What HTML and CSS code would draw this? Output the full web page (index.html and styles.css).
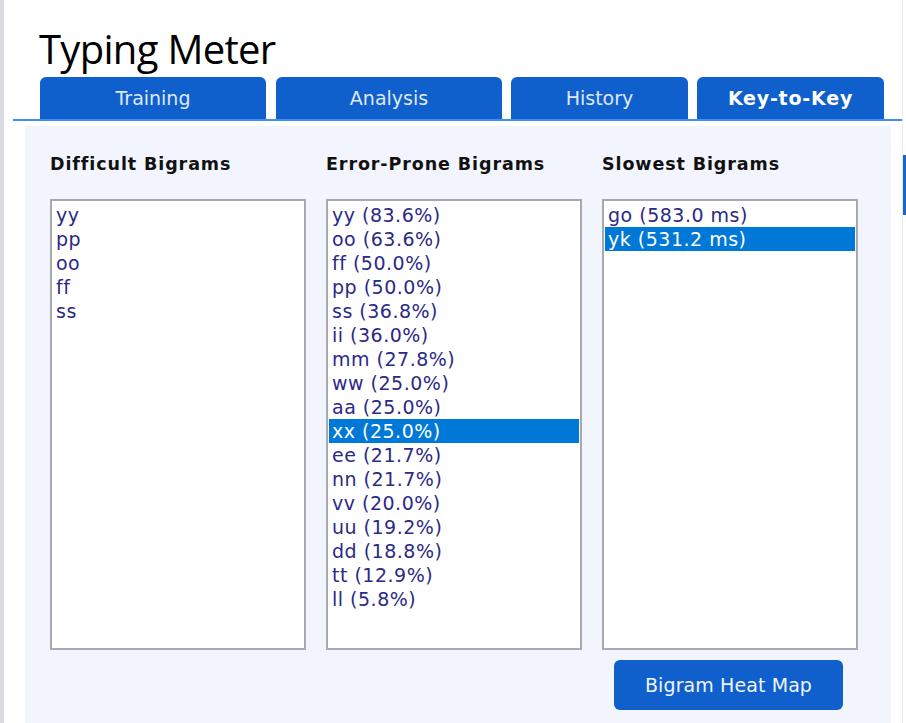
FILE: index.html
```html
<!DOCTYPE html>
<html lang="en">
<head>
    <meta charset="UTF-8">
    <meta name="viewport" content="width=device-width, initial-scale=1.0">
    <title>Typing Meter</title>
    <link rel="stylesheet" href="styles.css">
</head>
<body>
    <div class="window">
        <h1 class="title">Typing Meter</h1>

        <!-- Вкладки -->
        <div class="tab-bar">
            <div class="tab">Training</div>
            <div class="tab">Analysis</div>
            <div class="tab tab-small">History</div>
            <div class="tab tab-active">Key-to-Key</div>
        </div>

        <div class="panel">
            <div class="columns">
                <div class="column">
                    <h3>Difficult Bigrams</h3>
                    <div class="listbox">
                        <div class="item">yy</div>
                        <div class="item">pp</div>
                        <div class="item">oo</div>
                        <div class="item">ff</div>
                        <div class="item">ss</div>
                    </div>
                </div>
                <div class="column">
                    <h3>Error-Prone Bigrams</h3>
                    <div class="listbox">
                        <div class="item">yy (83.6%)</div>
                        <div class="item">oo (63.6%)</div>
                        <div class="item">ff (50.0%)</div>
                        <div class="item">pp (50.0%)</div>
                        <div class="item">ss (36.8%)</div>
                        <div class="item">ii (36.0%)</div>
                        <div class="item">mm (27.8%)</div>
                        <div class="item">ww (25.0%)</div>
                        <div class="item">aa (25.0%)</div>
                        <div class="item selected">xx (25.0%)</div>
                        <div class="item">ee (21.7%)</div>
                        <div class="item">nn (21.7%)</div>
                        <div class="item">vv (20.0%)</div>
                        <div class="item">uu (19.2%)</div>
                        <div class="item">dd (18.8%)</div>
                        <div class="item">tt (12.9%)</div>
                        <div class="item">ll (5.8%)</div>
                    </div>
                </div>
                <div class="column">
                    <h3>Slowest Bigrams</h3>
                    <div class="listbox">
                        <div class="item">go (583.0 ms)</div>
                        <div class="item selected">yk (531.2 ms)</div>
                    </div>
                    <button class="btn">Bigram Heat Map</button>
                </div>
            </div>
        </div>
    </div>
    <div class="scroll-thumb"></div>
</body>
</html>
```

FILE: styles.css
```css
body {
    margin: 0;
    padding: 0;
    background: #ffffff;
    font-family: "DejaVu Sans", Verdana, sans-serif;
    overflow: hidden;
}

.window {
    border-left: 4px solid #d9dcdf;
    border-right: 1px solid #e8eaee;
    width: 898px;
    height: 723px;
    box-sizing: content-box;
}

.title {
    font-family: "Open Sans", "Noto Sans", sans-serif;
    font-weight: normal;
    font-size: 40px;
    color: #000;
    margin: 0;
    padding: 24px 0 0 35px;
    line-height: 50px;
    height: 53px;
    letter-spacing: -0.7px;
}

.tab-bar {
    display: flex;
    gap: 10px;
    margin-left: 9px;
    width: 862px;
    padding-left: 27px;
    border-bottom: 2px solid #3f8ef0;
}

.tab {
    width: 226px;
    height: 42px;
    background: #0f5fcc;
    color: #dfe8f6;
    border-radius: 6px 6px 0 0;
    font-size: 19px;
    line-height: 42px;
    text-align: center;
}

.tab-small {
    width: 177px;
    margin-left: -1px;
}

.tab-active {
    width: 187px;
    margin-left: -1px;
    font-weight: bold;
    color: #ffffff;
    letter-spacing: 0.8px;
}

.panel {
    margin: 5px 0 0 21px;
    width: 841px;
    height: 600px;
    background: #f2f5fd;
    padding: 0 0 0 25px;
}

.columns {
    display: flex;
    gap: 20px;
}

.column {
    width: 256px;
    display: flex;
    flex-direction: column;
}

.column h3 {
    font-size: 17.5px;
    font-weight: bold;
    letter-spacing: 0.9px;
    white-space: nowrap;
    color: #111;
    margin: 27px 0 0 0;
    line-height: 22px;
    height: 46px;
}

.listbox {
    width: 256px;
    height: 451px;
    box-sizing: border-box;
    background: #fff;
    border: 2px solid #a6a9ad;
    padding: 2px 1px;
}

.item {
    font-size: 19px;
    letter-spacing: 0.5px;
    line-height: 24px;
    height: 24px;
    white-space: nowrap;
    color: #2b2a86;
    padding-left: 3px;
}

.item.selected {
    background: #0078d7;
    color: #fff;
}

.btn {
    margin: 10px 0 0 12px;
    width: 229px;
    height: 50px;
    background: #0f5fcc;
    color: #f0f4fb;
    border: none;
    border-radius: 6px;
    font-family: "DejaVu Sans", Verdana, sans-serif;
    font-size: 19px;
    letter-spacing: 0.1px;
    cursor: pointer;
}

.scroll-thumb {
    position: fixed;
    top: 155px;
    right: 0;
    width: 3px;
    height: 60px;
    background: #1565d8;
}
```
